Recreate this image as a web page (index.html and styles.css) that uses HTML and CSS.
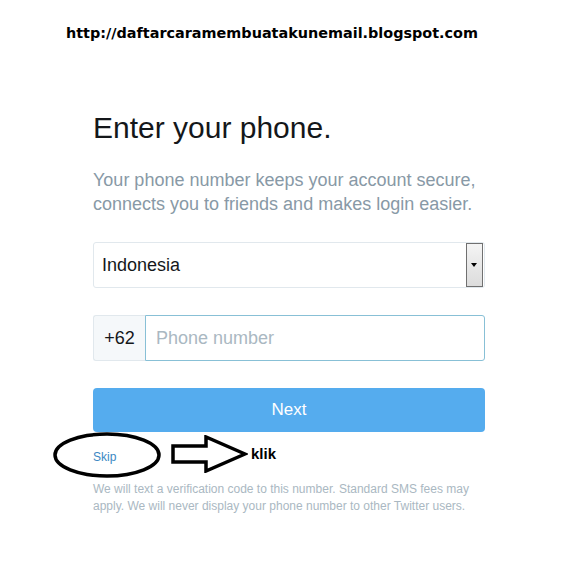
FILE: index.html
```html
<!DOCTYPE html>
<html lang="en">
<head>
  <meta charset="UTF-8">
  <meta name="viewport" content="width=device-width, initial-scale=1.0">
  <title>Enter your phone</title>
  <link rel="stylesheet" href="styles.css">
</head>
<body>
  <div class="site-url">http://daftarcaramembuatakunemail.blogspot.com</div>

  <div class="phone-form">
    <h1>Enter your phone.</h1>
    <p class="lead">Your phone number keeps your account secure, connects you to friends and makes login easier.</p>

    <!-- Country select -->
    <div class="select-box">
      <span class="select-value">Indonesia</span>
      <span class="select-arrow"></span>
    </div>

    <!-- Phone number with country code -->
    <div class="input-group">
      <span class="input-addon">+62</span>
      <input type="text" class="phone-input" placeholder="Phone number">
    </div>

    <button class="btn-next">Next</button>

    <div class="skip-row">
      <a href="#" class="skip-link">Skip</a>

      <!-- hand-drawn annotation -->
      <svg class="mark-circle" width="112" height="50" viewBox="0 0 112 50">
        <ellipse cx="56" cy="25" rx="52" ry="21" fill="none" stroke="#000" stroke-width="3.5"/>
      </svg>
      <svg class="mark-arrow" width="78" height="38" viewBox="0 0 78 38">
        <polygon points="3,11 36,11 36,2 75,19 36,36 36,27 3,27" fill="#fff" stroke="#000" stroke-width="3.5" stroke-linejoin="miter"/>
      </svg>
      <span class="mark-text">klik</span>
    </div>

    <p class="note">We will text a verification code to this number. Standard SMS fees may apply. We will never display your phone number to other Twitter users.</p>
  </div>
</body>
</html>
```

FILE: styles.css
```css
body {
  margin: 0;
  font-family: "Liberation Sans", Arial, sans-serif;
  background: #fff;
}

.site-url {
  padding: 25px 0 0 66px;
  font-family: "DejaVu Sans", Verdana, sans-serif;
  font-size: 14.4px;
  font-weight: bold;
  color: #000;
}

.phone-form {
  width: 392px;
  margin: 0 0 0 93px;
  padding-top: 71px;
}

.phone-form h1 {
  margin: 0;
  font-size: 30px;
  font-weight: normal;
  line-height: 32px;
  color: #14171a;
}

.lead {
  margin: 24px 0 0;
  font-size: 18px;
  line-height: 24px;
  color: #8899a6;
}

.select-box {
  display: flex;
  align-items: center;
  justify-content: space-between;
  height: 44px;
  margin-top: 26px;
  border: 1px solid #e1e8ed;
  border-radius: 3px;
  padding: 0 1px 0 8px;
}

.select-value {
  font-size: 18px;
  color: #14171a;
}

.select-arrow {
  position: relative;
  width: 15px;
  height: 42px;
  border: 1px solid #707070;
  background: linear-gradient(#f4f4f4, #dcdcdc);
}

.select-arrow::after {
  content: "";
  position: absolute;
  left: 4px;
  top: 19px;
  border-left: 3.5px solid transparent;
  border-right: 3.5px solid transparent;
  border-top: 4px solid #000;
}

.input-group {
  display: flex;
  height: 46px;
  margin-top: 27px;
}

.input-addon {
  display: flex;
  align-items: center;
  justify-content: center;
  width: 51px;
  background: #f5f8fa;
  border: 1px solid #e1e8ed;
  border-right: none;
  border-radius: 3px 0 0 3px;
  font-size: 18px;
  color: #14171a;
}

.phone-input {
  flex: 1;
  min-width: 0;
  margin: 0;
  padding: 0 10px;
  border: 1px solid #88c0d6;
  border-radius: 0 3px 3px 0;
  font-family: inherit;
  font-size: 18px;
  color: #14171a;
  outline: none;
}

.phone-input::placeholder {
  color: #aab8c2;
}

.btn-next {
  display: block;
  width: 100%;
  height: 44px;
  margin-top: 27px;
  border: none;
  border-radius: 4px;
  background: #55acee;
  color: #fff;
  font-family: inherit;
  font-size: 17px;
  cursor: pointer;
}

.skip-row {
  position: relative;
  height: 43px;
}

.skip-link {
  position: relative;
  top: 15px;
  font-size: 12px;
  color: #3b88c3;
  text-decoration: none;
}

.mark-circle {
  position: absolute;
  left: -42px;
  top: -2px;
}

.mark-arrow {
  position: absolute;
  left: 77px;
  top: 3px;
}

.mark-text {
  position: absolute;
  left: 158px;
  top: 13px;
  font-size: 15px;
  font-weight: bold;
  color: #000;
}

.note {
  margin: 6px 0 0;
  font-size: 12px;
  line-height: 17px;
  color: #aab8c2;
}
```
